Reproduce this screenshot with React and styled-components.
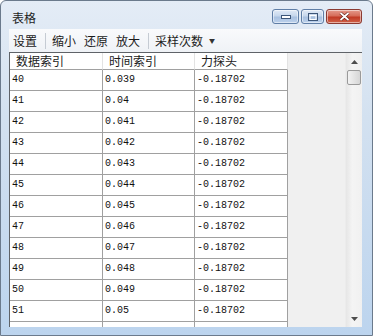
import React from 'react';
import styled, { createGlobalStyle } from 'styled-components';

const GlobalStyle = createGlobalStyle`
  html, body {
    margin: 0;
    padding: 0;
    background: #ffffff;
  }
  * {
    box-sizing: border-box;
  }
`;

const cjk = `"Noto Sans CJK SC", "Microsoft YaHei", sans-serif`;
const num = `"Liberation Mono", "DejaVu Sans Mono", monospace`;

const Window = styled.div`
  width: 373px;
  height: 336px;
  display: flex;
  flex-direction: column;
  border: 1px solid #6b7a8c;
  border-radius: 6px 6px 0 0;
  background: linear-gradient(180deg, #e4ecf6 0%, #d3e1f0 35%, #bcd4ee 100%);
  padding: 0 10px 8px 8px;
  font-family: ${cjk};
  overflow: hidden;
`;

const TitleBar = styled.div`
  height: 28px;
  display: flex;
  align-items: center;
  justify-content: space-between;
  padding: 0 0 0 3px;
`;

const Title = styled.span`
  font-size: 12px;
  color: #1e1e1e;
  margin-top: 5px;
`;

const Controls = styled.div`
  display: flex;
  align-self: flex-start;
  margin-top: 8px;
  gap: 2px;
`;

const CtrlButton = styled.div`
  width: ${(p) => p.$w}px;
  height: 15px;
  border: 1px solid ${(p) => (p.$close ? '#8b3a32' : '#5f7ea6')};
  border-radius: 3px;
  display: flex;
  align-items: center;
  justify-content: center;
  background: ${(p) =>
    p.$close
      ? 'linear-gradient(180deg, #e59a8c 0%, #d66d5a 45%, #c13a25 55%, #d0634a 100%)'
      : 'linear-gradient(180deg, #e1eaf6 0%, #c6d7ec 45%, #a9c1e0 55%, #bcd1ec 100%)'};
  box-shadow: inset 0 0 0 1px rgba(255, 255, 255, 0.5);
`;

const Client = styled.div`
  flex: 1;
  display: flex;
  flex-direction: column;
  background: #f3f5f8;
  min-height: 0;
`;

const Toolbar = styled.div`
  height: 23px;
  display: flex;
  align-items: center;
  font-size: 12px;
  color: #1b1b1b;
  background: linear-gradient(180deg, #f9fafc 0%, #eff2f6 100%);
`;

const ToolItem = styled.span`
  padding: 0 4px;
  white-space: nowrap;
  display: flex;
  align-items: center;
`;

const Sep = styled.span`
  width: 1px;
  height: 16px;
  background: #c5cbd3;
  margin: 0 2px 0 4px;
`;

const Caret = styled.span`
  font-size: 6px;
  margin-left: 6px;
  color: #333;
`;

const GridArea = styled.div`
  flex: 1;
  display: flex;
  border-top: 1px solid #5f6368;
  border-left: 1px solid #5f6368;
  background: #f0f0f0;
  min-height: 0;
  overflow: hidden;
`;

const Table = styled.div`
  flex: 1;
  display: flex;
  flex-direction: column;
`;

const Row = styled.div`
  display: grid;
  grid-template-columns: 93px 92px 93px;
  height: ${(p) => (p.$head ? 17 : 21)}px;
  flex-shrink: 0;
`;

const HeadCell = styled.div`
  background: #ffffff;
  border-right: 1px solid #e3e3e3;
  border-bottom: 1px solid #a0a0a0;
  font-size: 12px;
  line-height: 16px;
  padding-left: 6px;
  color: #1a1a1a;
  white-space: nowrap;
`;

const Cell = styled.div`
  background: #ffffff;
  border-right: 1px solid #a0a0a0;
  border-bottom: 1px solid #a0a0a0;
  font-family: ${num};
  font-size: 10px;
  line-height: 20px;
  padding-left: 2px;
  color: #111;
  white-space: nowrap;
`;

const ScrollBar = styled.div`
  width: 17px;
  display: flex;
  flex-direction: column;
  align-items: center;
  background: linear-gradient(90deg, #e6e6e6 0%, #f4f4f4 40%, #f0f0f0 100%);
  border-left: 1px solid #ececec;
`;

const Arrow = styled.div`
  height: 17px;
  width: 100%;
  display: flex;
  align-items: center;
  justify-content: center;
`;

const Thumb = styled.div`
  width: 14px;
  height: 15px;
  border: 1px solid #9a9a9a;
  border-radius: 2px;
  background: linear-gradient(90deg, #f2f2f2 0%, #e4e4e4 50%, #d6d6d6 100%);
`;

const Track = styled.div`
  flex: 1;
`;

const rows = Array.from({ length: 12 }, (_, i) => {
  const idx = 40 + i;
  const t = parseFloat((0.039 + i * 0.001).toFixed(3)).toString();
  return { idx, t, f: '-0.18702' };
});

const App = () => {
  return (
    <>
      <GlobalStyle />
      <Window>
        <TitleBar>
          <Title>表格</Title>
          <Controls>
            <CtrlButton $w={27}>
              <svg width="10" height="4" viewBox="0 0 10 4">
                <rect x="0.5" y="0.5" width="9" height="3" fill="#fff" stroke="#3d5678" />
              </svg>
            </CtrlButton>
            <CtrlButton $w={23}>
              <svg width="10" height="8" viewBox="0 0 10 8">
                <rect x="0.5" y="0.5" width="9" height="7" fill="none" stroke="#3d5678" />
                <rect x="2" y="2.5" width="6" height="4" fill="none" stroke="#fff" />
              </svg>
            </CtrlButton>
            <CtrlButton $w={36} $close>
              <svg width="11" height="9" viewBox="0 0 11 9">
                <path d="M1.5 1 L9.5 8 M9.5 1 L1.5 8" stroke="#5a1b14" strokeWidth="3" />
                <path d="M1.5 1 L9.5 8 M9.5 1 L1.5 8" stroke="#ffffff" strokeWidth="1.8" />
              </svg>
            </CtrlButton>
          </Controls>
        </TitleBar>
        <Client>
          <Toolbar>
            <ToolItem>设置</ToolItem>
            <Sep />
            <ToolItem>缩小</ToolItem>
            <ToolItem>还原</ToolItem>
            <ToolItem>放大</ToolItem>
            <Sep />
            <ToolItem>
              采样次数<Caret>▼</Caret>
            </ToolItem>
          </Toolbar>
          <GridArea>
            <Table>
              <Row $head>
                <HeadCell>数据索引</HeadCell>
                <HeadCell>时间索引</HeadCell>
                <HeadCell>力探头</HeadCell>
              </Row>
              {rows.map((r) => (
                <Row key={r.idx}>
                  <Cell>{r.idx}</Cell>
                  <Cell>{r.t}</Cell>
                  <Cell>{r.f}</Cell>
                </Row>
              ))}
              <Row>
                <Cell />
                <Cell />
                <Cell />
              </Row>
            </Table>
            <ScrollBar>
              <Arrow>
                <svg width="7" height="4" viewBox="0 0 7 4">
                  <path d="M0 4 L3.5 0 L7 4 Z" fill="#4d4d4d" />
                </svg>
              </Arrow>
              <Thumb />
              <Track />
              <Arrow>
                <svg width="7" height="4" viewBox="0 0 7 4">
                  <path d="M0 0 L3.5 4 L7 0 Z" fill="#4d4d4d" />
                </svg>
              </Arrow>
            </ScrollBar>
          </GridArea>
        </Client>
      </Window>
    </>
  );
};

export default App;
